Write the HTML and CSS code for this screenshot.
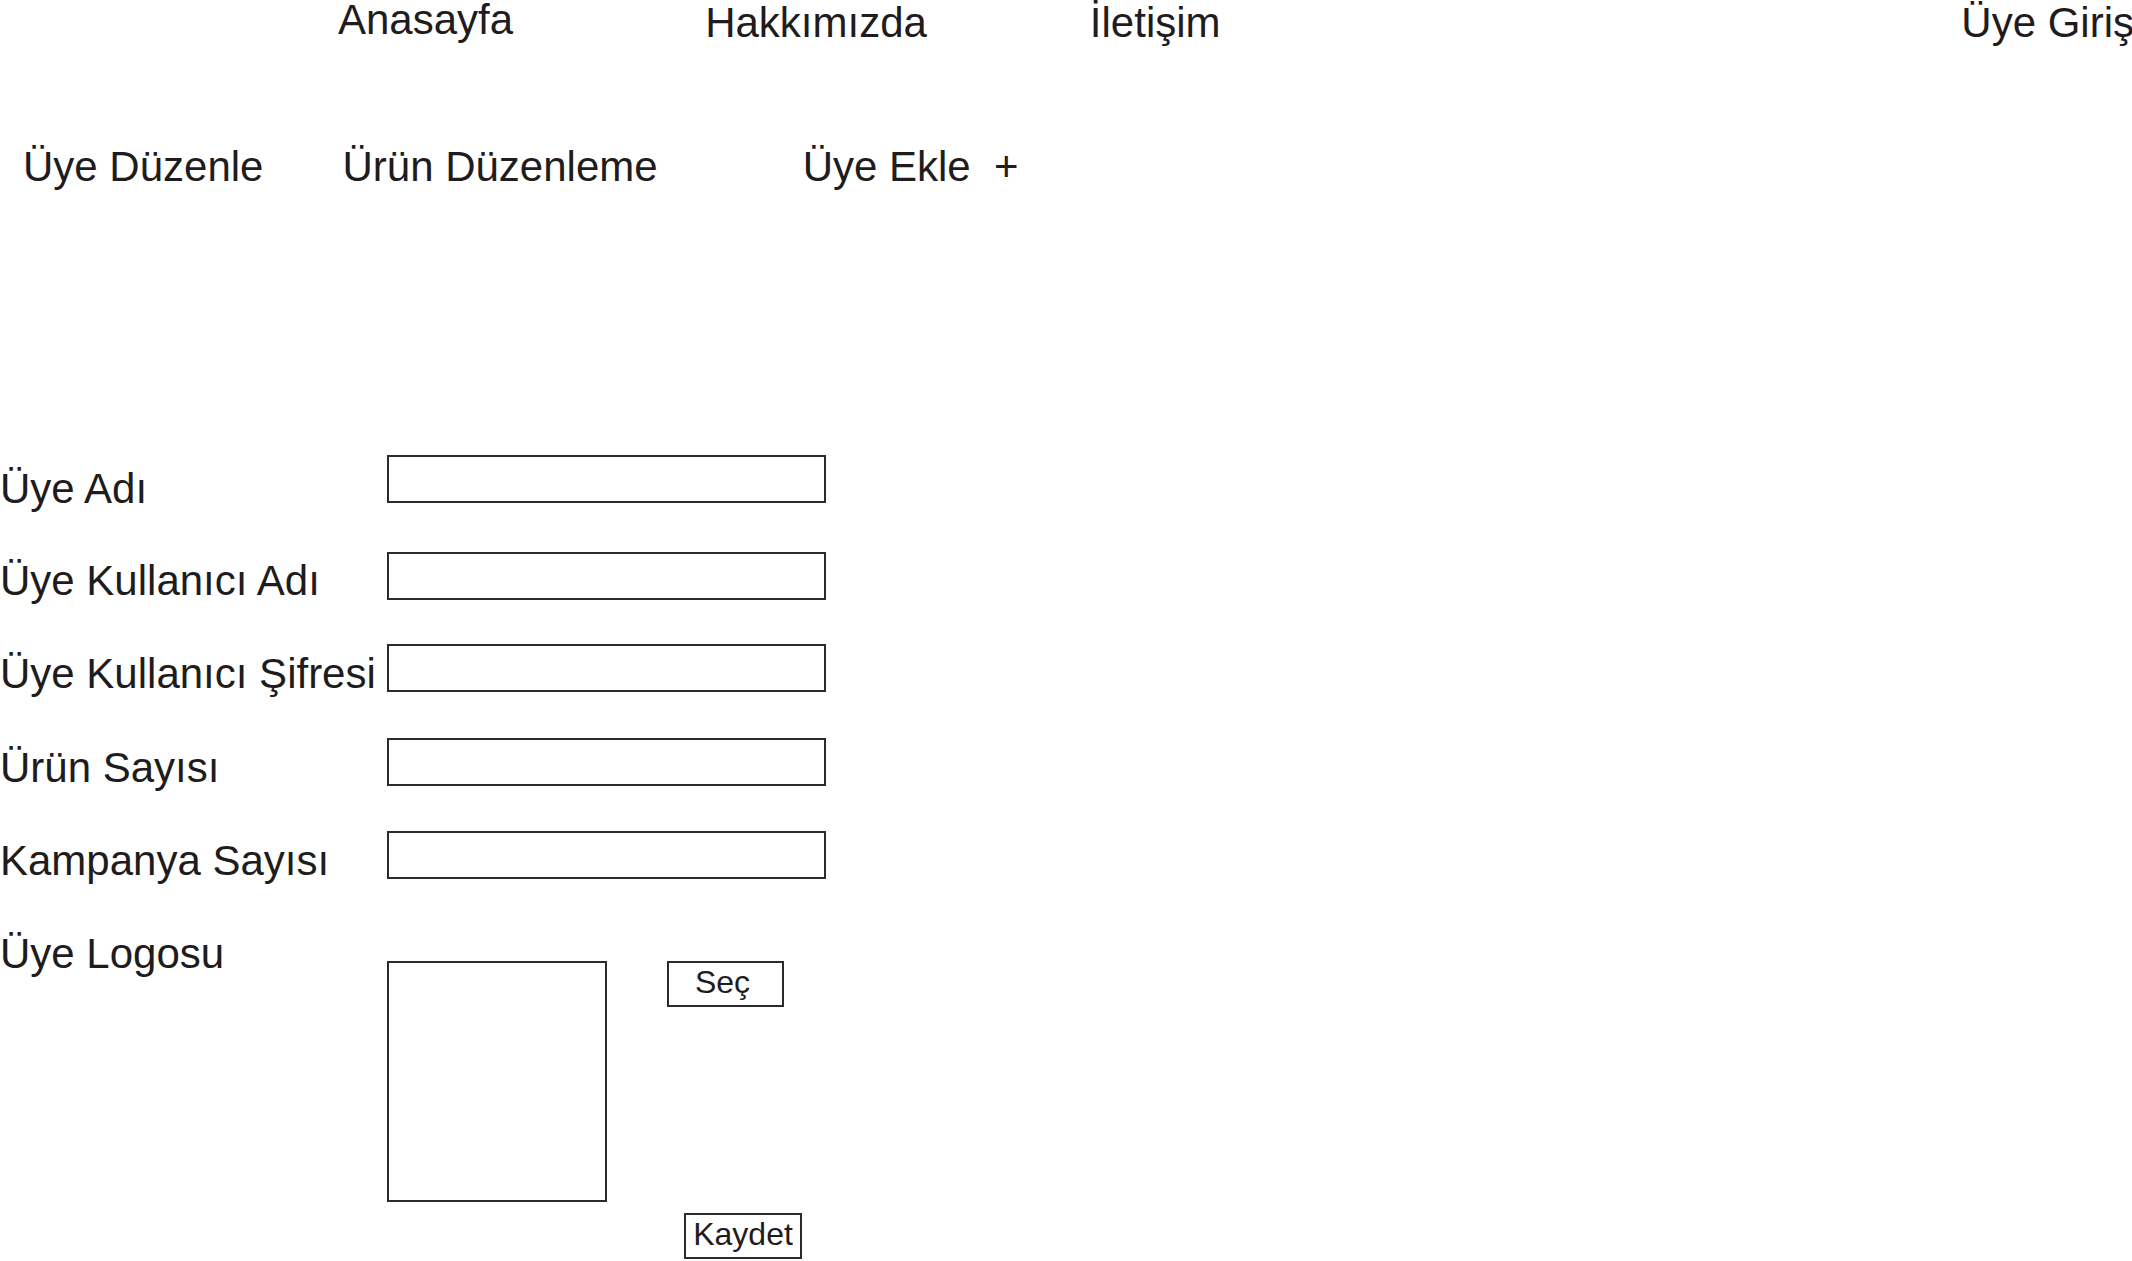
FILE: index.html
```html
<!DOCTYPE html>
<html lang="tr">
<head>
<meta charset="utf-8">
<title>Üye Ekle</title>
<link rel="stylesheet" href="styles.css">
</head>
<body>
<nav class="topnav">
  <a class="topnav__item topnav__item--home" href="#">Anasayfa</a>
  <a class="topnav__item topnav__item--about" href="#">Hakkımızda</a>
  <a class="topnav__item topnav__item--contact" href="#">İletişim</a>
  <a class="topnav__item topnav__item--login" href="#">Üye Giriş</a>
</nav>
<nav class="subnav">
  <a class="subnav__item subnav__item--members" href="#">Üye Düzenle</a>
  <a class="subnav__item subnav__item--products" href="#">Ürün Düzenleme</a>
  <a class="subnav__item subnav__item--add" href="#">Üye Ekle&nbsp; +</a>
</nav>
<form class="form">
  <div class="form-row">
    <label class="form-label">Üye Adı</label>
    <input class="field" type="text">
  </div>
  <div class="form-row">
    <label class="form-label">Üye Kullanıcı Adı</label>
    <input class="field" type="text">
  </div>
  <div class="form-row">
    <label class="form-label">Üye Kullanıcı Şifresi</label>
    <input class="field" type="text">
  </div>
  <div class="form-row">
    <label class="form-label">Ürün Sayısı</label>
    <input class="field" type="text">
  </div>
  <div class="form-row">
    <label class="form-label">Kampanya Sayısı</label>
    <input class="field" type="text">
  </div>
  <div class="logo-row">
    <label class="form-label">Üye Logosu</label>
    <div class="logo-col">
      <div class="logo-top">
        <div class="logo-box"></div>
        <button class="btn btn--select" type="button">Seç</button>
      </div>
      <button class="btn btn--save" type="button">Kaydet</button>
    </div>
  </div>
</form>
</body>
</html>
```
FILE: styles.css
```css
html, body {
  margin: 0;
  padding: 0;
  background: #ffffff;
}
body {
  font-family: "Liberation Sans", Arial, sans-serif;
  color: #1f1c1d;
  font-size: 42px;
  line-height: 42px;
  overflow: hidden;
  width: 2132px;
  height: 1261px;
}
a {
  color: inherit;
  text-decoration: none;
}

.topnav {
  display: flex;
  align-items: flex-start;
  height: 44px;
  padding-left: 338px;
  padding-top: 2px;
  box-sizing: border-box;
}
.topnav__item {
  white-space: nowrap;
}
.topnav__item--home {
  margin-top: -3px;
}
.topnav__item--about {
  margin-left: 192px;
}
.topnav__item--contact {
  margin-left: 163px;
}
.topnav__item--login {
  margin-left: auto;
  margin-right: -2px;
}

.subnav {
  display: flex;
  margin-top: 102px;
  padding-left: 23px;
  height: 42px;
}
.subnav__item {
  white-space: nowrap;
}
.subnav__item--products {
  margin-left: 79px;
}
.subnav__item--add {
  margin-left: 145px;
}

.form {
  margin-top: 267px;
}
.form-row {
  display: flex;
  align-items: flex-start;
  height: 48px;
}
.form-label {
  flex: none;
  width: 387px;
  white-space: nowrap;
  margin-top: 9px;
}
.form-row:nth-child(1) .form-label { margin-top: 13px; }
.form-row:nth-child(2) { margin-top: 49px; }
.form-row:nth-child(2) .form-label { margin-top: 8px; }
.form-row:nth-child(3) { margin-top: 44px; }
.form-row:nth-child(3) .form-label { margin-top: 9px; }
.form-row:nth-child(4) { margin-top: 46px; }
.form-row:nth-child(5) { margin-top: 45px; }

.field {
  flex: none;
  width: 439px;
  height: 48px;
  box-sizing: border-box;
  border: 2px solid #2b2b2b;
  border-radius: 0;
  padding: 0 6px;
  margin: 0;
  background: #ffffff;
  font: inherit;
  font-size: 28px;
  outline: none;
}

.logo-row {
  display: flex;
  align-items: flex-start;
  margin-top: 54px;
}
.logo-row .form-label {
  margin-top: 0;
}
.logo-col {
  display: flex;
  flex-direction: column;
  align-items: flex-start;
  margin-top: 28px;
}
.logo-top {
  display: flex;
  align-items: flex-start;
}
.logo-box {
  width: 220px;
  height: 241px;
  box-sizing: border-box;
  border: 2px solid #2b2b2b;
}
.btn {
  box-sizing: border-box;
  height: 46px;
  border: 2px solid #2b2b2b;
  border-radius: 0;
  background: #ffffff;
  color: #1f1c1d;
  font-family: "Liberation Sans", Arial, sans-serif;
  font-size: 32px;
  line-height: 38px;
  padding: 0 0 4px 0;
  margin: 0;
  text-align: center;
  cursor: pointer;
}
.btn--select {
  width: 117px;
  margin-left: 60px;
  padding-right: 6px;
}
.btn--save {
  width: 118px;
  margin-left: 297px;
  margin-top: 11px;
}
```
